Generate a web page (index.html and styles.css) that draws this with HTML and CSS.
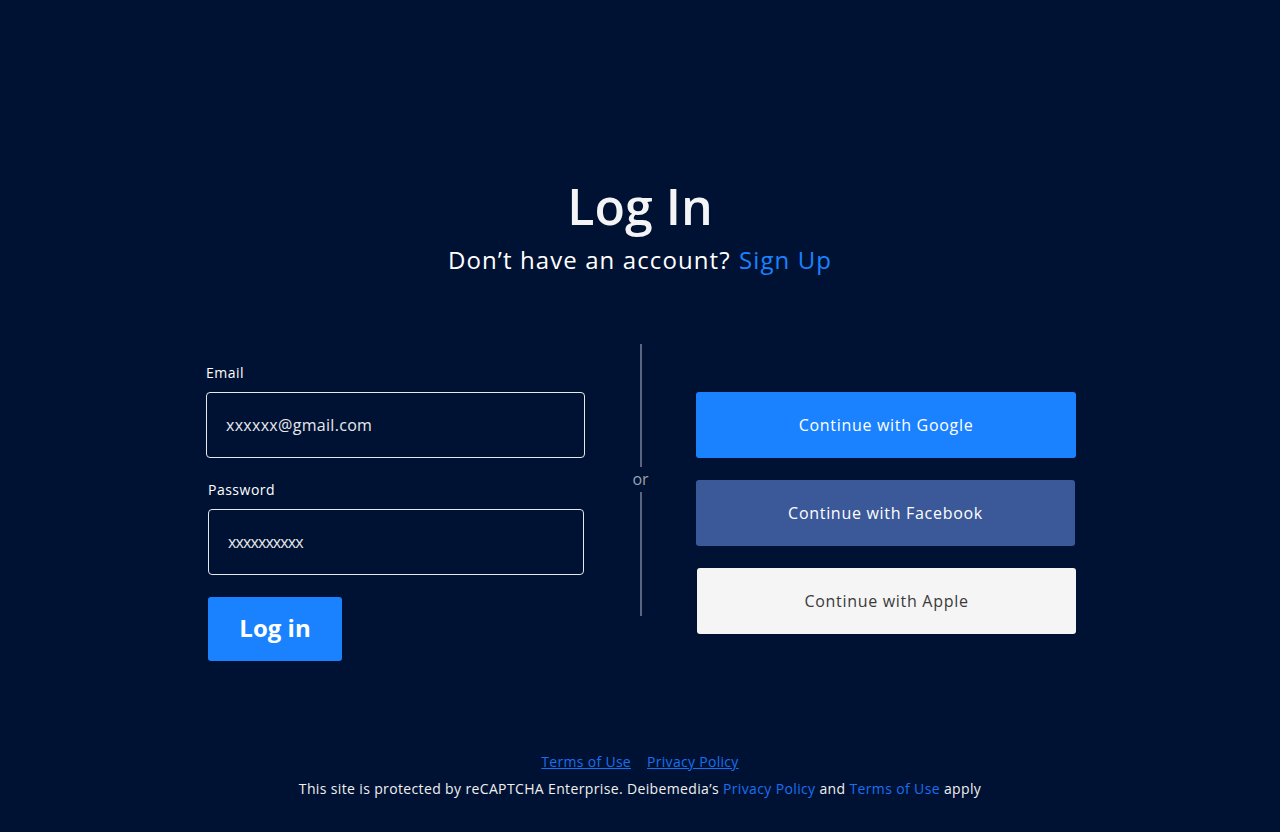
FILE: index.html
```html
<!DOCTYPE html>
<html lang="en">
<head>
<meta charset="utf-8">
<title>Log In</title>
<link rel="stylesheet" href="styles.css">
</head>
<body>
<div class="page">
  <header class="head">
    <h1 class="title">Log In</h1>
    <p class="subtitle">Don’t have an account? <a class="link" href="#">Sign Up</a></p>
  </header>
  <main class="main">
    <form class="form">
      <div class="field">
        <label class="label">Email</label>
        <div class="input">xxxxxx@gmail.com</div>
      </div>
      <div class="field field-pw">
        <label class="label">Password</label>
        <div class="input input-pw">xxxxxxxxxx</div>
      </div>
      <div class="field-pw">
        <button type="button" class="login-btn">Log in</button>
      </div>
    </form>
    <div class="divider">
      <span class="line"></span>
      <span class="or">or</span>
      <span class="line line-b"></span>
    </div>
    <div class="social">
      <button type="button" class="sbtn google">Continue with Google</button>
      <button type="button" class="sbtn facebook">Continue with Facebook</button>
      <button type="button" class="sbtn apple">Continue with Apple</button>
    </div>
  </main>
  <footer class="foot">
    <div class="foot-links">
      <a class="flink" href="#">Terms of Use</a>
      <a class="flink" href="#">Privacy Policy</a>
    </div>
    <p class="foot-text">This site is protected by reCAPTCHA Enterprise. Deibemedia’s <a class="blue" href="#">Privacy Policy</a> and <a class="blue" href="#">Terms of Use</a> apply</p>
  </footer>
</div>
</body>
</html>
```
FILE: styles.css
```css
* { box-sizing: border-box; }
html, body {
  margin: 0;
  padding: 0;
  background: #001233;
}
body {
  font-family: "Open Sans", "DejaVu Sans", sans-serif;
  color: #ffffff;
}
.page {
  height: 832px;
  display: flex;
  flex-direction: column;
  align-items: center;
}
.head {
  margin-top: 174px;
  text-align: center;
}
.title {
  margin: 0;
  font-size: 50px;
  line-height: 64px;
  font-weight: 600;
  color: #f4f4f6;
}
.subtitle {
  margin: 6px 0 0;
  font-size: 24px;
  line-height: 32px;
  font-weight: 400;
  letter-spacing: 1.1px;
  color: #ffffff;
}
.link {
  color: #1a82ff;
  text-decoration: none;
  margin-left: 1px;
}
.main {
  margin-top: 68px;
  width: 872px;
  padding-left: 2px;
  display: grid;
  grid-template-columns: 379px 111px 380px;
}
.form {
  display: flex;
  flex-direction: column;
  padding-top: 20px;
}
.field {
  display: flex;
  flex-direction: column;
}
.field + .field {
  margin-top: 23px;
}
.field-pw {
  padding-left: 2px;
  padding-right: 1px;
}
.label {
  font-size: 14px;
  line-height: 18px;
  letter-spacing: 0.5px;
  color: #ffffff;
  margin-bottom: 10px;
}
.input {
  height: 66px;
  border: 1px solid #e6e8ee;
  border-radius: 4px;
  padding: 0 19px;
  display: flex;
  align-items: center;
  font-size: 16px;
  letter-spacing: 0.3px;
  color: #e8e8ec;
}
.input-pw {
  letter-spacing: -0.9px;
}
.login-btn {
  margin-top: 22px;
  width: 134px;
  height: 64px;
  padding: 0 0 3px;
  border: 0;
  border-radius: 3px;
  background: #1a82ff;
  color: #ffffff;
  font-family: inherit;
  font-size: 24px;
  font-weight: 700;
  cursor: pointer;
}
.divider {
  display: flex;
  flex-direction: column;
  align-items: center;
}
.line {
  width: 2px;
  height: 123px;
  background: #5b6580;
}
.line-b {
  height: 124px;
}
.or {
  font-size: 16px;
  line-height: 25px;
  color: #9aa0b0;
}
.social {
  padding-top: 48px;
  display: flex;
  flex-direction: column;
  gap: 22px;
}
.sbtn {
  height: 66px;
  border: 0;
  border-radius: 3px;
  font-family: inherit;
  font-size: 16px;
  font-weight: 500;
  letter-spacing: 0.7px;
  cursor: pointer;
}
.google {
  background: #1a82ff;
  color: #ffffff;
}
.facebook {
  background: #3b5998;
  color: #ffffff;
  margin-right: 1px;
}
.apple {
  background: #f5f5f5;
  color: #3a3a3a;
  margin-left: 1px;
}
.foot {
  margin-top: auto;
  padding-bottom: 33px;
  text-align: center;
}
.foot-links {
  display: flex;
  justify-content: center;
  gap: 16px;
  font-size: 14px;
  line-height: 20px;
  letter-spacing: 0.3px;
}
.flink {
  color: #1a6ff0;
  text-decoration: underline;
}
.foot-text {
  margin: 7px 0 0;
  font-size: 14px;
  line-height: 20px;
  letter-spacing: 0.36px;
  color: #f0f0f0;
}
.blue {
  color: #1a6ff0;
  text-decoration: none;
}
```
